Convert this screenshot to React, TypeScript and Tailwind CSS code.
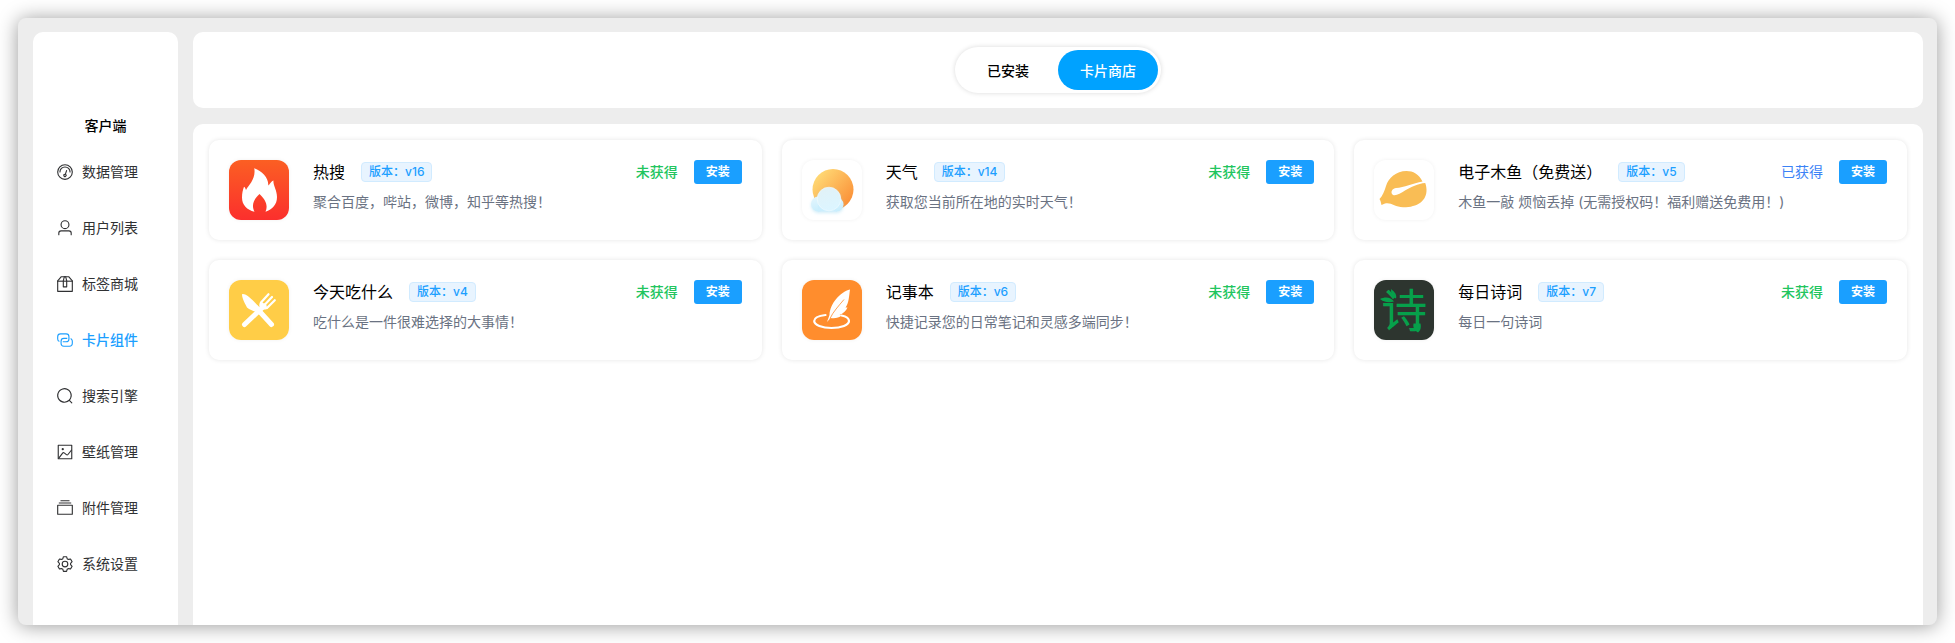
import React from "react";

const ICONS: Record<string, string> = {
  odometer:
    "M512 896a384 384 0 1 0 0-768 384 384 0 0 0 0 768m0 64a448 448 0 1 1 0-896 448 448 0 0 1 0 896M192 512a320 320 0 1 1 640 0 32 32 0 1 1-64 0 256 256 0 1 0-512 0 32 32 0 0 1-64 0M570.432 627.84A96 96 0 1 1 509.568 608l60.992-187.776A32 32 0 1 1 631.424 440l-60.992 187.776zM502.08 734.464a32 32 0 1 0 19.84-60.928 32 32 0 0 0-19.84 60.928",
  user:
    "M512 512a192 192 0 1 0 0-384 192 192 0 0 0 0 384m0 64a256 256 0 1 1 0-512 256 256 0 0 1 0 512m320 320v-96a96 96 0 0 0-96-96H288a96 96 0 0 0-96 96v96a32 32 0 1 1-64 0v-96a160 160 0 0 1 160-160h448a160 160 0 0 1 160 160v96a32 32 0 1 1-64 0",
  box:
    "M317.056 128 128 344.064V896h768V344.064L706.944 128zm-14.528-64h418.944a32 32 0 0 1 24.064 10.88l206.528 236.096A32 32 0 0 1 960 332.032V928a32 32 0 0 1-32 32H96a32 32 0 0 1-32-32V332.032a32 32 0 0 1 7.936-21.12L278.4 75.008A32 32 0 0 1 302.528 64z",
  boxLid: "M64 320h896v64H64z",
  boxTape:
    "M448 327.872V640h128V327.872L526.08 128h-28.16zM448 64h128l64 256v352a32 32 0 0 1-32 32H416a32 32 0 0 1-32-32V320z",
  connection:
    "M640 384v64H448a128 128 0 0 0-128 128v128a128 128 0 0 0 128 128h320a128 128 0 0 0 128-128V576a128 128 0 0 0-64-110.848V394.88c74.56 26.368 128 97.472 128 181.056v128a192 192 0 0 1-192 192H448a192 192 0 0 1-192-192V576a192 192 0 0 1 192-192z",
  connectionBack:
    "M384 640v-64h192a128 128 0 0 0 128-128V320a128 128 0 0 0-128-128H256a128 128 0 0 0-128 128v128a128 128 0 0 0 64 110.848v70.272A192.064 192.064 0 0 1 64 448V320a192 192 0 0 1 192-192h320a192 192 0 0 1 192 192v128a192 192 0 0 1-192 192z",
  search:
    "m795.904 750.72 124.992 124.928a32 32 0 0 1-45.248 45.248L750.656 795.904a416 416 0 1 1 45.248-45.248zM480 832a352 352 0 1 0 0-704 352 352 0 0 0 0 704",
  picture:
    "M160 160v704h704V160zm-32-64h768a32 32 0 0 1 32 32v768a32 32 0 0 1-32 32H128a32 32 0 0 1-32-32V128a32 32 0 0 1 32-32",
  pictureInner:
    "M384 288q64 0 64 64t-64 64-64-64 64-64M185.408 876.992l-50.816-38.912L350.72 556.032a96 96 0 0 1 134.592-17.856l1.856 1.472 122.88 99.136a32 32 0 0 0 44.992-4.864l216-269.888 49.92 39.936-215.808 269.824-.256.32a96 96 0 0 1-135.04 14.464l-122.88-99.072-.64-.512a32 32 0 0 0-44.8 5.952z",
  files:
    "M128 384v448h768V384zm-32-64h832a32 32 0 0 1 32 32v512a32 32 0 0 1-32 32H96a32 32 0 0 1-32-32V352a32 32 0 0 1 32-32m64-128h704v64H160zm96-128h512v64H256z",
  setting:
    "M600.704 64a32 32 0 0 1 30.464 22.208l35.2 109.376c14.784 7.232 28.928 15.36 42.432 24.512l112.384-24.192a32 32 0 0 1 34.432 15.36L944.32 364.8a32 32 0 0 1-4.032 37.504l-77.12 85.12a357.12 357.12 0 0 1 0 49.024l77.12 85.248a32 32 0 0 1 4.032 37.504l-88.704 153.6a32 32 0 0 1-34.432 15.296L708.8 803.904c-13.44 9.088-27.648 17.28-42.368 24.512l-35.264 109.376A32 32 0 0 1 600.704 960H423.296a32 32 0 0 1-30.464-22.208L357.696 828.48a351.616 351.616 0 0 1-42.56-24.64l-112.32 24.256a32 32 0 0 1-34.432-15.36L79.68 659.2a32 32 0 0 1 4.032-37.504l77.12-85.248a357.12 357.12 0 0 1 0-48.896l-77.12-85.248A32 32 0 0 1 79.68 364.8l88.704-153.6a32 32 0 0 1 34.432-15.296l112.32 24.256c13.568-9.152 27.776-17.408 42.56-24.64l35.2-109.312A32 32 0 0 1 423.232 64H600.64zm-23.424 64H446.72l-36.352 113.088-24.512 11.968a294.113 294.113 0 0 0-34.816 20.096l-22.656 15.36-116.224-25.088-65.28 113.152 79.68 88.192-1.92 27.136a293.12 293.12 0 0 0 0 40.192l1.92 27.136-79.808 88.192 65.344 113.152 116.224-25.024 22.656 15.296a294.113 294.113 0 0 0 34.816 20.096l24.512 11.968L446.72 896h130.688l36.48-113.152 24.448-11.904a288.282 288.282 0 0 0 34.752-20.096l22.592-15.296 116.288 25.024 65.28-113.152-79.744-88.192 1.92-27.136a293.12 293.12 0 0 0 0-40.256l-1.92-27.136 79.808-88.128-65.344-113.152-116.288 24.96-22.592-15.232a287.616 287.616 0 0 0-34.752-20.096l-24.448-11.904L577.344 128zM512 320a192 192 0 1 1 0 384 192 192 0 0 1 0-384m0 64a128 128 0 1 0 0 256 128 128 0 0 0 0-256",
};

const MENU = [
  { label: "数据管理", paths: ["odometer"] },
  { label: "用户列表", paths: ["user"] },
  { label: "标签商城", paths: ["box", "boxTape"] },
  { label: "卡片组件", paths: ["connection", "connectionBack"], active: true },
  { label: "搜索引擎", paths: ["search"] },
  { label: "壁纸管理", paths: ["picture", "pictureInner"] },
  { label: "附件管理", paths: ["files"] },
  { label: "系统设置", paths: ["setting"] },
];

function MenuIcon({ paths }: { paths: string[] }) {
  return (
    <svg viewBox="0 0 1024 1024" className="h-[18px] w-[18px]" fill="currentColor">
      {paths.map((p) => (
        <path key={p} d={ICONS[p]} />
      ))}
      {paths[0] === "box" && <path d={ICONS.boxLid} />}
    </svg>
  );
}

function FireIcon() {
  return (
    <svg viewBox="0 0 60 60" className="size-full">
      <defs>
        <linearGradient id="fire" x1="0" y1="0" x2="0" y2="1">
          <stop offset="0" stopColor="#fb5f23" />
          <stop offset="1" stopColor="#fb2f2d" />
        </linearGradient>
      </defs>
      <rect width="60" height="60" fill="url(#fire)" />
      <path
        d="M25.300 8.300C33 11.500 39.500 17 39.300 25.500C41 24.500 41.200 22 44.500 20.500C43.800 25 48 30 48 37C48 44.500 43.500 49.500 36.500 51.700C39.500 45 36 39 30.500 34C25 39 22 45 25.500 51.700C18 50 13 45 13 37.500C13 33.500 13.800 30 15 26.800C16 27.500 16.500 28.500 17 30C20 24.500 27 19 25.300 8.300Z"
        fill="#fff"
      />
    </svg>
  );
}

function WeatherIcon() {
  return (
    <svg viewBox="0 0 60 60" className="size-full">
      <defs>
        <linearGradient id="sun" x1="0.1" y1="0.1" x2="0.9" y2="0.8">
          <stop offset="0" stopColor="#ffdc77" />
          <stop offset="1" stopColor="#fb9239" />
        </linearGradient>
        <linearGradient id="cloud" x1="0" y1="0" x2="0.3" y2="1">
          <stop offset="0" stopColor="#e6f6fd" />
          <stop offset="1" stopColor="#c9eefd" />
        </linearGradient>
        <linearGradient id="puff" x1="0" y1="0" x2="0.3" y2="1">
          <stop offset="0" stopColor="#e2f1f6" />
          <stop offset="1" stopColor="#dcf5ff" />
        </linearGradient>
        <filter id="haze" x="-20%" y="-20%" width="140%" height="160%">
          <feDropShadow dx="0" dy="1.500" stdDeviation="1.500" floodColor="#8fd3ee" floodOpacity="0.4" />
        </filter>
      </defs>
      <circle cx="31" cy="29.500" r="20.500" fill="url(#sun)" />
      <g filter="url(#haze)">
        <circle cx="16.500" cy="44" r="7.500" fill="url(#cloud)" />
        <circle cx="34.500" cy="44.500" r="7" fill="url(#cloud)" />
        <rect x="16" y="44" width="19" height="7.500" fill="#cbeefd" />
        <circle cx="27" cy="39" r="11.800" fill="url(#puff)" stroke="#f3fbff" strokeWidth="0.600" />
      </g>
    </svg>
  );
}

function FishIcon() {
  return (
    <svg viewBox="0 0 60 60" className="size-full">
      <path
        d="M48.500 21.500C45 14 39 11 32.500 11C22 11 14.500 18 12 26C10.500 31 8.500 36 5.500 39L6.500 41L7.500 45L11 43.500C17 42 21 47 29 47.300C43 47.500 53 41 52.500 29.500C52.400 27 52 25 51.200 23C44 23.500 37 27 31 30.500C26 34 20 37 18 34C16.500 31 19 28.500 22 28C30 27.500 39 23.500 48.500 21.500Z"
        fill="#f9bd55"
      />
    </svg>
  );
}

function FoodIcon() {
  return (
    <svg viewBox="0 0 60 60" className="size-full">
      <rect width="60" height="60" fill="#ffcd47" />
      <g stroke="#fff" fill="none" strokeLinecap="round">
        <path d="M15.500 44.500L35 26" strokeWidth="5" />
        <path d="M27 27.500L42.500 44.500" strokeWidth="5" />
        <path d="M32 22.500L39.500 14.200M35 25.500L43 17M38 28L45.800 20.200" strokeWidth="2.200" />
      </g>
      <path d="M13.300 14C18 13.500 24 20.500 30 27L26 31.500C24 31 20.500 29.500 18 27.500C16 24 12 16 13.300 14Z" fill="#fff" />
      <path d="M30.900 22.500C29 26.500 31.500 31 37.500 29.200L39 28L32.500 21.500Z" fill="#fff" />
    </svg>
  );
}

function NoteIcon() {
  return (
    <svg viewBox="0 0 60 60" className="size-full">
      <rect width="60" height="60" fill="#ff8d2d" />
      <path
        d="M23.500 35C16 35.800 12.200 38 12.200 41C12.200 44.800 20 48 29.500 48C39.500 48 47 44.800 47 41C47 38.500 44 36.500 39.500 35.500"
        fill="none"
        stroke="#fff"
        strokeWidth="2.200"
        strokeLinecap="round"
      />
      <path
        d="M48 9.500C38 12 28 23.500 27.500 35L25 42L28.500 38C33 38.500 37 38 39.500 35.500L37.500 35C41 33.500 44 31 45.500 27.500L43.500 27.500C47 23 47 16 48 9.500Z"
        fill="#fff"
      />
      <path d="M42 19.500C36.500 26 31 32 28 38.500" fill="none" stroke="#ff8d2d" strokeWidth="0.800" />
    </svg>
  );
}

function PoemIcon() {
  return (
    <div className="relative flex size-full items-center justify-center bg-[#2d352f]">
      <span className="text-[46px] leading-none text-[#06a04b]">诗</span>
      <svg viewBox="0 0 60 60" className="absolute inset-0 size-full" fill="#06a04b">
        <path d="M17 9C21 12 23 15 22 18.500C18.500 17 17 14 17 9Z" />
        <path d="M6 19C11 16.500 17 17 20 21.500C15 23 9 22 6 19Z" />
        <path d="M39.500 43.500H46.500C47.500 48 46 51 44 52.500C41 51 38.500 48 39.500 43.500Z" />
      </svg>
    </div>
  );
}

const CARDS = [
  { title: "热搜", version: "v16", desc: "聚合百度，哔站，微博，知乎等热搜！", icon: <FireIcon />, owned: false },
  { title: "天气", version: "v14", desc: "获取您当前所在地的实时天气！", icon: <WeatherIcon />, owned: false },
  {
    title: "电子木鱼（免费送）",
    version: "v5",
    desc: "木鱼一敲 烦恼丢掉 (无需授权码！福利赠送免费用！)",
    icon: <FishIcon />,
    owned: true,
  },
  { title: "今天吃什么", version: "v4", desc: "吃什么是一件很难选择的大事情！", icon: <FoodIcon />, owned: false },
  { title: "记事本", version: "v6", desc: "快捷记录您的日常笔记和灵感多端同步！", icon: <NoteIcon />, owned: false },
  { title: "每日诗词", version: "v7", desc: "每日一句诗词", icon: <PoemIcon />, owned: false },
];

type Card = (typeof CARDS)[number];

function StoreCard({ card }: { card: Card }) {
  return (
    <article className="flex h-[100px] rounded-[10px] bg-white px-5 pt-5 shadow-[0_0_5px_rgba(0,0,0,0.1)]">
      <div className="size-[60px] shrink-0 overflow-hidden rounded-xl shadow-[0_0_4px_rgba(0,0,0,0.06)]">{card.icon}</div>
      <div className="ml-6 min-w-0 flex-1">
        <div className="flex h-6 items-center">
          <h3 className="text-base leading-6 text-black">{card.title}</h3>
          <span className="ml-4 flex h-5 items-center rounded border border-[#d1ebff] bg-[#e8f4ff] px-[7px] text-xs leading-none font-medium text-[#1c9fff]">
            版本：{card.version}
          </span>
          <span className={card.owned ? "ml-auto text-sm text-[#3b82f6]" : "ml-auto text-sm font-medium text-[#22c55e]"}>
            {card.owned ? "已获得" : "未获得"}
          </span>
          <button className="ml-4 h-6 w-12 rounded-[3px] bg-[#1a9fff] text-xs font-bold text-white">安装</button>
        </div>
        <p className="mt-2 text-sm leading-5 text-gray-500">{card.desc}</p>
      </div>
    </article>
  );
}

export default function App() {
  return (
    <div className="h-[643px] w-[1955px] overflow-hidden bg-white pt-[18px] pl-[18px] font-[Inter,'Noto_Sans_CJK_SC',sans-serif]">
      <div className="flex h-[607px] w-[1919px] gap-[15px] overflow-hidden rounded-lg bg-[#ededed] px-[15px] pt-[14px] pr-[14px] shadow-[0_1px_20px_rgba(0,0,0,0.4)]">
        <aside className="w-[145px] shrink-0 rounded-t-[10px] bg-white pt-[84px]">
          <div className="text-center text-sm leading-5 font-medium text-black">客户端</div>
          <nav className="pt-2">
            {MENU.map((item) => (
              <a
                key={item.label}
                className={
                  item.active
                    ? "flex h-14 items-center pl-[23px] text-sm font-medium text-[#1c9fff]"
                    : "flex h-14 items-center pl-[23px] text-sm text-[#303133]"
                }
              >
                <MenuIcon paths={item.paths} />
                <span className="ml-2">{item.label}</span>
              </a>
            ))}
          </nav>
        </aside>
        <main className="flex flex-1 flex-col gap-4">
          <header className="flex h-[76px] shrink-0 items-center justify-center rounded-[10px] bg-white">
            <div className="flex rounded-full bg-white p-[3px] shadow-[0_0_5px_rgba(0,0,0,0.15)]">
              <button className="h-10 w-[100px] rounded-full pt-px text-sm font-medium text-black">已安装</button>
              <button className="h-10 w-[100px] rounded-full bg-[#00a2ff] pt-px text-sm font-medium text-white">卡片商店</button>
            </div>
          </header>
          <section className="grid flex-1 grid-cols-3 content-start gap-5 rounded-t-[10px] bg-white p-4">
            {CARDS.map((card) => (
              <StoreCard key={card.title} card={card} />
            ))}
          </section>
        </main>
      </div>
    </div>
  );
}
